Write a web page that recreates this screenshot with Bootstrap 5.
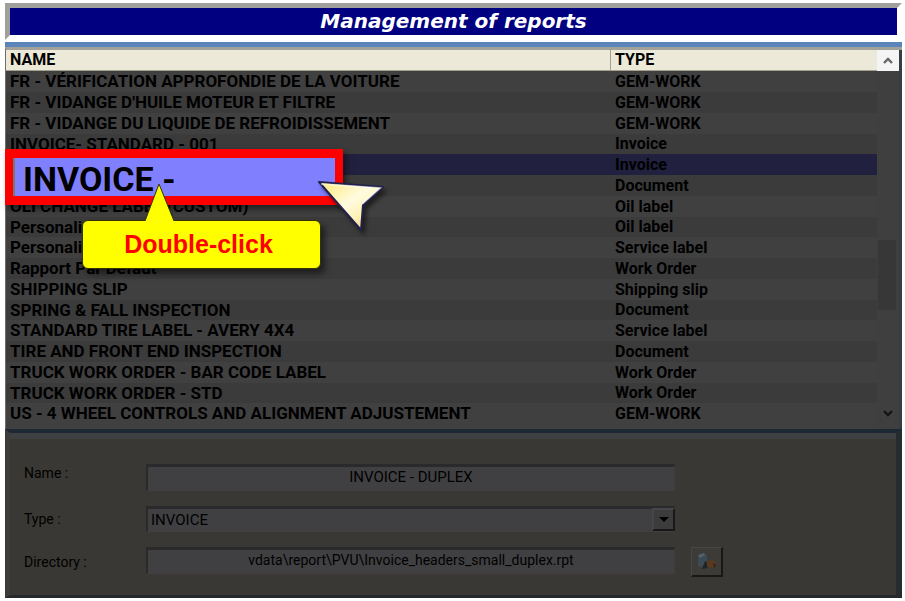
<!DOCTYPE html>
<html lang="en">
<head>
<meta charset="utf-8">
<meta name="viewport" content="width=device-width, initial-scale=1">
<title>Management of reports</title>
<link href="https://cdn.jsdelivr.net/npm/bootstrap@5.3.0/dist/css/bootstrap.min.css" rel="stylesheet">
<style>
body { background: #fff; color: #000; font-family: Roboto, "Liberation Sans", sans-serif; font-size: 16px; }
.window-frame { padding: 3px 3px 4px 5px; }
.title-bar { border: 5px solid; border-color: #a09f9b #fff #fff #a09f9b; background: #000080; margin-bottom: 2px; }
.title-bar h1 { font: italic bold 20px/27px "DejaVu Sans", sans-serif; color: #fff; margin: 0; }
.list-pane { border-top: 5px solid #5b84b9; background: #404040; }
.list-body { border-top: 3px solid #a3a19b; border-left: 1px solid #6c6c6c; }
.report-table { width: 100%; table-layout: fixed; border-collapse: separate; border-spacing: 0; font-weight: 700; }
.report-table th, .report-table td { padding: 0 4px; line-height: 20px; white-space: nowrap; overflow: hidden; }
.report-table th { background: #ece9d8; border-bottom: 1px solid #a3a08e; font-weight: 700; font-size: 16px; }
.report-table th + th { border-left: 1px solid #a3a08e; }
.report-table .type-col { width: 267px; }
.report-table td { line-height: 21px; height: 21px; font-size: 17px; }
.report-table tr:nth-child(4n) td { line-height: 20px; height: 20px; }
.report-table td + td { padding-left: 5px; font-size: 16px; }
.report-table tbody tr:nth-child(even) { background: #3b3b3b; }
.report-table tbody tr.chosen { background: #21213f; }
.scroll-rail { width: 25px; background: #3f3f3f; border-right: 3px solid #383d43; }
.scroll-rail button { border: 0; padding: 0; height: 21px; background: transparent; display: block; width: 100%; line-height: 0; }
.scroll-rail .rail-up { background: #f4f4f4; }
.scroll-thumb { height: 70px; margin: 169px 3px 0 1px; background: #373737; }
.list-tail { height: 5px; }
.edit-pane { border: 1px solid; border-width: 4px 6px 3px 5px; border-color: #1e2832 #262b2f #25292b #3d3c3b; background: #3a3834; box-shadow: inset 0 6px 0 #3e4041; padding: 31px 0 18px 14px; font-size: 14px; }
.edit-grid { display: grid; grid-template-columns: 106px minmax(0, 1fr) 32px; column-gap: 16px; row-gap: 15px; padding-right: 173px; }
.edit-grid label { line-height: 19px; }
.field-box { width: 100%; height: 27px; border: solid; border-width: 3px 1px 1px 2px; border-color: #2a292b #3f3d3c #443f3e #2c2a29; background: #404042; color: #000; padding: 0 3px 4px; border-radius: 0; font-size: 15px; line-height: 19px; outline: 0; }
.field-box.path-box { font-size: 14px; }
.choice-box { position: relative; }
.choice-box select { appearance: none; height: 26px; padding: 0 3px; }
.choice-arrow { position: absolute; right: 0; top: 2px; width: 23px; height: 23px; pointer-events: none; background: #3d3c3d; border: 2px solid; border-color: #474646 #181818 #181818 #474646; display: flex; align-items: center; justify-content: center; }
.browse-btn { width: 32px; height: 30px; padding: 0; background: #3d3b37; border: solid; border-width: 1px 2px 2px 1px; border-color: #4a4846 #191816 #191816 #4a4846; line-height: 0; }
.magnifier { position: absolute; left: 0; top: 102px; width: 338px; height: 56px; border: solid #f00; border-width: 9px 8px; background: #8080ff; font-size: 34px; font-weight: 700; line-height: 43px; padding-left: 10px; box-shadow: 3px 4px 6px rgba(0,0,0,.5), inset 2px 0 0 #777; white-space: nowrap; }
.callout { position: absolute; left: 77px; top: 173px; width: 239px; height: 49px; border: 1px solid #333300; border-radius: 6px; background: #ff0; color: #f00; font: bold 25px/47px "Liberation Sans", sans-serif; text-align: center; padding-right: 6px; box-shadow: 4px 5px 6px rgba(0,0,0,.5); }
.callout svg { position: absolute; left: 61px; top: -38px; }
.pointer-art { position: absolute; left: 311px; top: 132px; filter: drop-shadow(3px 4px 2px rgba(0,0,0,.5)); }
</style>
<script src="https://cdn.jsdelivr.net/npm/bootstrap@5.3.0/dist/js/bootstrap.bundle.min.js"></script>
</head>
<body>
<main class="window-frame">
  <header class="title-bar text-center"><h1>Management of reports</h1></header>
  <section class="list-pane position-relative">
    <div class="list-body d-flex">
      <div class="flex-fill overflow-hidden">
        <table class="report-table">
          <colgroup><col><col class="type-col"></colgroup>
          <thead><tr><th scope="col">NAME</th><th scope="col">TYPE</th></tr></thead>
          <tbody>
            <tr><td>FR - VÉRIFICATION APPROFONDIE DE LA VOITURE</td><td>GEM-WORK</td></tr>
            <tr><td>FR - VIDANGE D'HUILE MOTEUR ET FILTRE</td><td>GEM-WORK</td></tr>
            <tr><td>FR - VIDANGE DU LIQUIDE DE REFROIDISSEMENT</td><td>GEM-WORK</td></tr>
            <tr><td>INVOICE- STANDARD - 001</td><td>Invoice</td></tr>
            <tr class="chosen"><td></td><td>Invoice</td></tr>
            <tr><td></td><td>Document</td></tr>
            <tr><td>OLI CHANGE LABEL (CUSTOM)</td><td>Oil label</td></tr>
            <tr><td>Personaliz</td><td>Oil label</td></tr>
            <tr><td>Personaliz</td><td>Service label</td></tr>
            <tr><td>Rapport Par Defaut</td><td>Work Order</td></tr>
            <tr><td>SHIPPING SLIP</td><td>Shipping slip</td></tr>
            <tr><td>SPRING &amp; FALL INSPECTION</td><td>Document</td></tr>
            <tr><td>STANDARD TIRE LABEL - AVERY 4X4</td><td>Service label</td></tr>
            <tr><td>TIRE AND FRONT END INSPECTION</td><td>Document</td></tr>
            <tr><td>TRUCK WORK ORDER - BAR CODE LABEL</td><td>Work Order</td></tr>
            <tr><td>TRUCK WORK ORDER - STD</td><td>Work Order</td></tr>
            <tr><td>US - 4 WHEEL CONTROLS AND ALIGNMENT ADJUSTEMENT</td><td>GEM-WORK</td></tr>
          </tbody>
        </table>
        <div class="list-tail"></div>
      </div>
      <div class="scroll-rail d-flex flex-column flex-shrink-0">
        <button class="rail-up" type="button" aria-label="Scroll up"><svg width="12" height="9" viewBox="0 0 12 9"><path d="M2 7 6 3l4 4" fill="none" stroke="#666" stroke-width="2.4"/></svg></button>
        <div class="scroll-thumb"></div>
        <button class="mt-auto" type="button" aria-label="Scroll down"><svg width="12" height="9" viewBox="0 0 12 9"><path d="M2 2 6 6l4-4" fill="none" stroke="#151515" stroke-width="2.4"/></svg></button>
        <div class="list-tail"></div>
      </div>
    </div>
    <div class="magnifier">INVOICE -</div>
    <div class="callout">Double-click
      <svg width="32" height="39" viewBox="0 0 32 39"><path d="M1 38 15 1l15 37" fill="#ff0" stroke="#333300"/><path d="M2 38h27v1H2z" fill="#ff0"/></svg>
    </div>
    <svg class="pointer-art" width="72" height="54" viewBox="0 0 72 54">
      <defs><linearGradient id="gold" x1="0" y1="0" x2="1" y2="1"><stop offset="0" stop-color="#ffe873"/><stop offset=".45" stop-color="#fffbe0"/><stop offset=".65" stop-color="#fff3b8"/><stop offset="1" stop-color="#e9bd62"/></linearGradient></defs>
      <path d="M3 3 67 8 47 26 45 51z" fill="url(#gold)" stroke="#22204d" stroke-width="2" stroke-linejoin="round"/>
      <path d="M5 5 64 9 46 25" fill="none" stroke="#fff" stroke-opacity=".5" stroke-width="2"/>
    </svg>
  </section>
  <form class="edit-pane">
    <div class="edit-grid">
      <label for="reportName">Name :</label>
      <input class="field-box text-center" id="reportName" type="text" value="INVOICE - DUPLEX">
      <span></span>
      <label class="align-self-center" for="reportType">Type :</label>
      <div class="choice-box">
        <select class="field-box" id="reportType"><option>INVOICE</option></select>
        <span class="choice-arrow"><svg width="10" height="5" viewBox="0 0 10 5"><path d="M0 0h10L5 5z" fill="#000"/></svg></span>
      </div>
      <span></span>
      <label class="align-self-center" for="reportDir">Directory :</label>
      <input class="field-box path-box text-center" id="reportDir" type="text" value="vdata\report\PVU\Invoice_headers_small_duplex.rpt">
      <button class="browse-btn" type="button" aria-label="Browse">
        <svg width="22" height="20" viewBox="0 0 22 20"><path d="M2 3 8 1l3 2v8l-3 5-6-2z" fill="#3b4a55"/><path d="M2 3 8 1l1 2-5 3z" fill="#566068"/><path d="M9 9l3 2-1 5-5 1z" fill="#202427"/><path d="M11 9c4-2 9 0 9 3 0 4-4 5-9 2z" fill="#593a20"/><path d="M17 11c3 0 4 4 1 5z" fill="#3c2514"/></svg>
      </button>
    </div>
  </form>
</main>
</body>
</html>
